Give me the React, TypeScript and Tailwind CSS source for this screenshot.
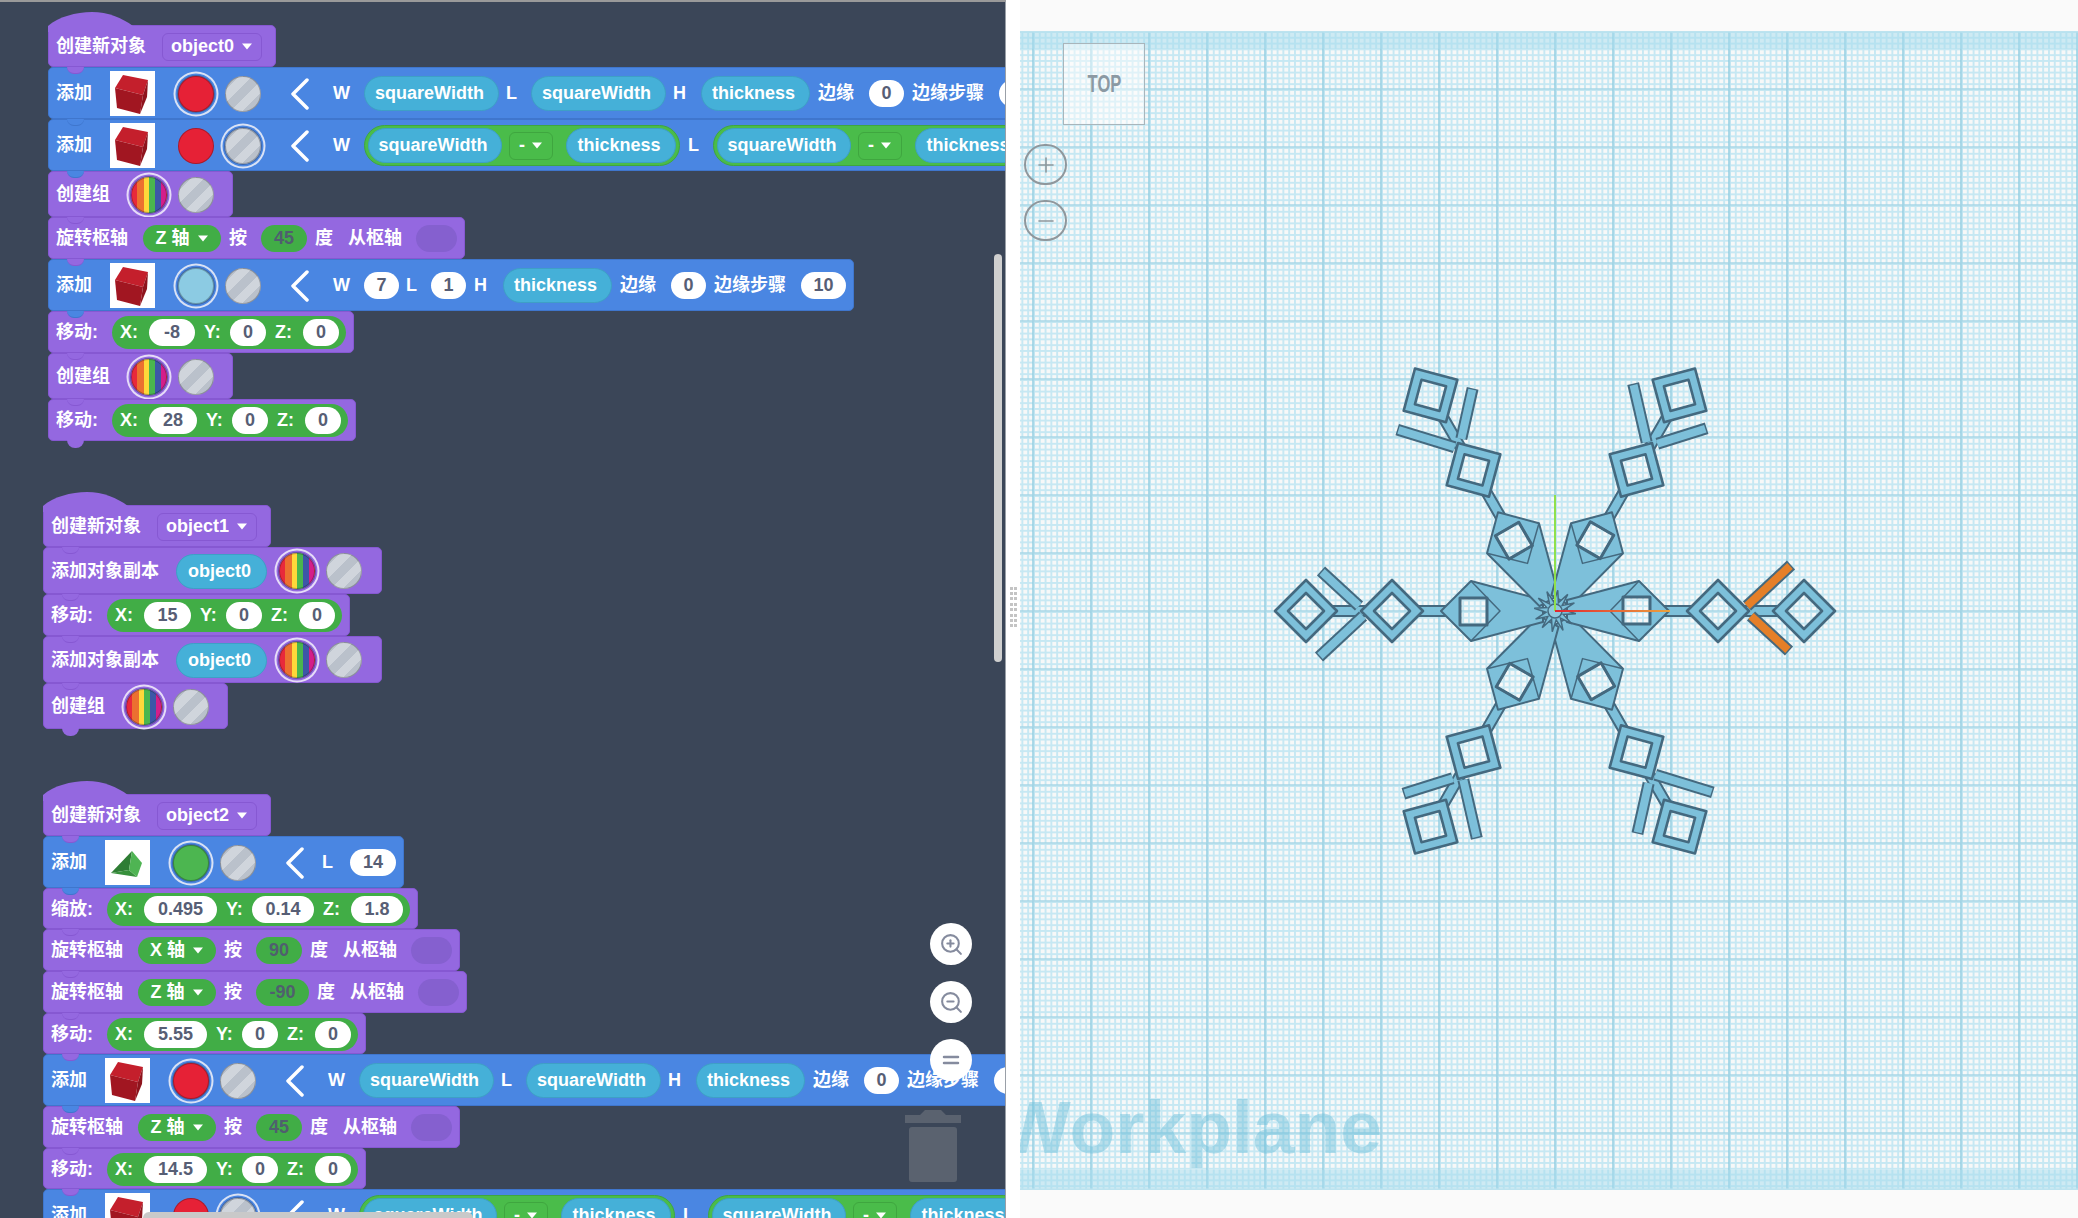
import type { ReactNode } from "react";
import { Equal, Minus, Plus, ZoomIn, ZoomOut } from "lucide-react";

const RED = "bg-[#e62136]";
const SKY = "bg-[#8ccbe3]";
const LIME = "bg-[#4cb650]";
const STRIPES =
  "bg-[repeating-linear-gradient(135deg,#bac1cb_0px,#bac1cb_9px,#d0d5dc_9px,#d0d5dc_18px)]";
const RAINBOW =
  "bg-[linear-gradient(90deg,#e8293b_0%,#e8293b_16%,#ec7030_16%,#ec7030_34%,#ffd83a_34%,#ffd83a_50%,#4ab64e_50%,#4ab64e_67%,#3d57a8_67%,#3d57a8_84%,#d41e8a_84%,#d41e8a_100%)]";
const RING_BLUE = "shadow-[0_0_0_1px_#3d66a8,0_0_0_2.5px_#4a86e2,0_0_0_4.5px_#d9e2f5]";
const RING_PURPLE = "shadow-[0_0_0_1px_#62509f,0_0_0_2.5px_#9468e0,0_0_0_4.5px_#e6dcf8]";

interface RowProps {
  color: "purple" | "blue";
  notch?: "purple" | "blue";
  tail?: boolean;
  className: string;
  children: ReactNode;
}

const Row = ({ color, notch, tail, className, children }: RowProps) => {
  const tone =
    color === "purple"
      ? "bg-[#9468e0] border-[#8658d2]"
      : "bg-[#4a86e2] border-[#3f76cd]";
  return (
    <div
      className={`relative flex w-max items-center rounded-[5px] border pl-[7px] pt-px ${tone} ${className}`}
    >
      {notch && (
        <span
          className={`absolute -top-px left-[18px] h-[7px] w-[17px] rounded-b-full border-b ${
            notch === "purple"
              ? "bg-[#9468e0] border-[#8658d2]"
              : "bg-[#4a86e2] border-[#3f76cd]"
          }`}
        />
      )}
      {tail && (
        <span className="absolute -bottom-[8px] left-[18px] h-[8px] w-[17px] rounded-b-full bg-[#9468e0]" />
      )}
      {children}
    </div>
  );
};

const Swatch = ({ fill, ring = "" }: { fill: string; ring?: string }) => (
  <span
    className={`block h-[36px] w-[36px] shrink-0 rounded-full border border-[#00000040] ${fill} ${ring}`}
  />
);

const Caret = () => (
  <svg width="12" height="7" viewBox="0 0 12 7" className="shrink-0">
    <polygon points="1,0.5 11,0.5 6,6.5" fill="white" />
  </svg>
);

const Field = ({ value, className }: { value: string; className: string }) => (
  <span
    className={`ml-[7px] flex h-[27px] shrink-0 items-center justify-center rounded-full bg-white text-[#575e75] ${className}`}
  >
    {value}
  </span>
);

const VarPill = ({ label, className }: { label: string; className: string }) => (
  <span
    className={`flex h-[35px] shrink-0 items-center justify-center rounded-full border border-[#3e9fc6] bg-[#45b0d8] pr-[4px] ${className}`}
  >
    {label}
  </span>
);

const Cube = () => (
  <svg viewBox="0 0 45 45" className="h-full w-full">
    <polygon points="5,17 13,4 38,9 33,24" fill="#c41f2c" />
    <polygon points="5,17 33,24 30,43 7,37" fill="#a11621" />
    <polygon points="33,24 38,9 37,26 30,43" fill="#8e141d" />
  </svg>
);

const Prism = () => (
  <svg viewBox="0 0 45 45" className="h-full w-full">
    <polygon points="27,11 6,33 24,30" fill="#2e7d34" />
    <polygon points="6,33 32,37 24,30" fill="#37903c" />
    <polygon points="27,11 37,23 32,37 24,30" fill="#4fb453" />
  </svg>
);

interface AddHeadProps {
  shape?: "cube" | "prism";
  fill: string;
  selected: 0 | 1;
}

// shape tile, the two colour swatches and the collapse arrow
const AddHead = ({ shape = "cube", fill, selected }: AddHeadProps) => (
  <>
    <span className="w-[36px]">添加</span>
    <span className="ml-[18px] block h-[45px] w-[45px] shrink-0 bg-white">
      {shape === "cube" ? <Cube /> : <Prism />}
    </span>
    <span className="ml-[23px]">
      <Swatch fill={fill} ring={selected === 0 ? RING_BLUE : ""} />
    </span>
    <span className="ml-[11px]">
      <Swatch fill={STRIPES} ring={selected === 1 ? RING_BLUE : ""} />
    </span>
    <svg width="20" height="32" viewBox="0 0 20 32" className="ml-[29px] shrink-0">
      <polyline
        points="17,2 3,16 17,30"
        fill="none"
        stroke="white"
        strokeWidth="3.5"
        strokeLinecap="round"
        strokeLinejoin="round"
      />
    </svg>
  </>
);

const Hat = ({ name }: { name: string }) => (
  <Row color="purple" className="h-[42px] pr-[13px]">
    <svg
      width="86"
      height="20"
      viewBox="0 0 86 20"
      className="absolute -left-px -top-[14px]"
    >
      <path d="M0 20 V14 C10 5 28 0 44 0 C60 0 74 6 85 14 L86 20 Z" fill="#9468e0" />
    </svg>
    <span className="w-[92px]">创建新对象</span>
    <span className="ml-[14px] flex h-[28px] w-[100px] items-center justify-center gap-[7px] rounded-[6px] border border-[#8658d2]">
      {name}
      <Caret />
    </span>
  </Row>
);

const Group = ({ notch, tail }: { notch: "purple" | "blue"; tail?: boolean }) => (
  <Row color="purple" notch={notch} tail={tail} className="h-[46px] pr-[18px]">
    <span className="w-[55px]">创建组</span>
    <span className="ml-[20px]">
      <Swatch fill={RAINBOW} ring={RING_PURPLE} />
    </span>
    <span className="ml-[11px]">
      <Swatch fill={STRIPES} />
    </span>
  </Row>
);

interface RotateProps {
  axis: string;
  degrees: string;
  wide?: boolean;
  notch: "purple" | "blue";
  className?: string;
}

const Rotate = ({ axis, degrees, wide, notch, className = "h-[42px]" }: RotateProps) => (
  <Row color="purple" notch={notch} className={`pr-[7px] ${className}`}>
    <span>旋转枢轴</span>
    <span className="ml-[15px] flex h-[27px] w-[78px] items-center justify-center gap-[7px] rounded-full bg-[#41ad46]">
      {axis} 轴
      <Caret />
    </span>
    <span className="ml-[8px]">按</span>
    <span
      className={`ml-[14px] flex h-[27px] items-center justify-center rounded-full bg-[#41ad46] text-[#4f5f6e] ${
        wide ? "w-[53px]" : "w-[46px]"
      }`}
    >
      {degrees}
    </span>
    <span className="ml-[8px]">度</span>
    <span className="ml-[15px]">从枢轴</span>
    <span className="ml-[14px] block h-[27px] w-[41px] rounded-full bg-[#8560cf]" />
  </Row>
);

interface XyzProps {
  label: string;
  x: string;
  y: string;
  z: string;
  xw: string;
  yw?: string;
  zw?: string;
  notch: "purple" | "blue";
  tail?: boolean;
  className?: string;
}

const Xyz = ({
  label,
  x,
  y,
  z,
  xw,
  yw = "w-[36px]",
  zw = "w-[36px]",
  notch,
  tail,
  className = "h-[41px]",
}: XyzProps) => (
  <Row color="purple" notch={notch} tail={tail} className={`pr-[7px] ${className}`}>
    <span className="w-[41px]">{label}</span>
    <span className="ml-[15px] flex h-[33px] items-center rounded-full bg-[#41ad46] pl-[8px] pr-[7px]">
      <span className="w-[22px]">X:</span>
      <Field value={x} className={xw} />
      <span className="ml-[9px] w-[19px]">Y:</span>
      <Field value={y} className={yw} />
      <span className="ml-[9px] w-[21px]">Z:</span>
      <Field value={z} className={zw} />
    </span>
  </Row>
);

const Copy = ({ notch }: { notch: "purple" | "blue" }) => (
  <Row color="purple" notch={notch} className="h-[47px] pr-[19px]">
    <span className="w-[110px]">添加对象副本</span>
    <VarPill label="object0" className="ml-[15px] w-[91px]" />
    <span className="ml-[12px]">
      <Swatch fill={RAINBOW} ring={RING_PURPLE} />
    </span>
    <span className="ml-[11px]">
      <Swatch fill={STRIPES} />
    </span>
  </Row>
);

const Minus2 = ({ left }: { left: string }) => (
  <span className="flex h-[41px] shrink-0 items-center rounded-full border border-[#3fa63f] bg-[#4abc4a] pl-[3px] pr-[3px]">
    <VarPill label={left} className="w-[134px]" />
    <span className="ml-[7px] flex h-[28px] w-[44px] items-center justify-center gap-[6px] rounded-[6px] border border-[#3fa63f]">
      -
      <Caret />
    </span>
    <VarPill label="thickness" className="ml-[13px] w-[110px]" />
  </span>
);

const SquareRowTail = () => (
  <>
    <span className="ml-[23px]">W</span>
    <VarPill label="squareWidth" className="ml-[14px] w-[135px]" />
    <span className="ml-[7px]">L</span>
    <VarPill label="squareWidth" className="ml-[14px] w-[135px]" />
    <span className="ml-[7px]">H</span>
    <VarPill label="thickness" className="ml-[15px] w-[109px]" />
    <span className="ml-[8px]">边缘</span>
    <Field value="0" className="ml-[15px] w-[35px]" />
    <span className="ml-[8px]">边缘步骤</span>
    <Field value="10" className="ml-[15px] w-[45px]" />
  </>
);

const MinusRowTail = () => (
  <>
    <span className="ml-[23px]">W</span>
    <span className="ml-[14px]">
      <Minus2 left="squareWidth" />
    </span>
    <span className="ml-[8px]">L</span>
    <span className="ml-[14px]">
      <Minus2 left="squareWidth" />
    </span>
  </>
);

const Arm = ({ angle, prong }: { angle: number; prong: string }) => (
  <g transform={`translate(1555 611) rotate(${angle})`} stroke="#44697f" strokeWidth="2" strokeLinejoin="round">
    <rect x="95" y="-5" width="44" height="10" fill="#7dc0da" />
    <path
      d="M12 -11 L84 -30 L114 0 L84 30 L12 11 Z M68 -14 L68 13 L95 13 L95 -14 Z"
      fill="#7dc0da"
      fillRule="evenodd"
    />
    <path d="M84 -30 L55 0 L84 30" fill="none" strokeWidth="1.5" />
    <rect x="68" y="-14" width="27" height="27" fill="none" strokeWidth="3" />
    <rect x="188" y="-5" width="36" height="10" fill="#7dc0da" />
    <path
      d="M132 0 L163 -31 L194 0 L163 31 Z M145 0 L163 18 L181 0 L163 -18 Z"
      fill="#7dc0da"
      fillRule="evenodd"
      strokeWidth="2.6"
    />
    <path
      d="M218 0 L249 -31 L280 0 L249 31 Z M231 0 L249 18 L267 0 L249 -18 Z"
      fill="#7dc0da"
      fillRule="evenodd"
      strokeWidth="2.6"
    />
    <line x1="192" y1="-5" x2="236" y2="-46" stroke="#44697f" strokeWidth="12" />
    <line x1="196" y1="5" x2="234" y2="40" stroke="#44697f" strokeWidth="12" />
    <line x1="192" y1="-5" x2="235" y2="-45" stroke={prong} strokeWidth="8" />
    <line x1="196" y1="5" x2="233" y2="39" stroke={prong} strokeWidth="8" />
  </g>
);

const STAR = Array.from({ length: 24 }, (_, i) => {
  const r = i % 2 === 0 ? 21 : 9;
  const a = (i * Math.PI) / 12 + Math.PI / 24;
  return `${1555 + r * Math.cos(a)},${611 + r * Math.sin(a)}`;
}).join(" ");

const Workplane = () => (
  <svg viewBox="1020 31 1058 1159" className="absolute inset-0 h-full w-full">
    <defs>
      <pattern id="minor" x="1555" y="611" width="5.8" height="5.8" patternUnits="userSpaceOnUse">
        <rect width="5.8" height="5.8" fill="#f7f8f8" />
        <rect x="0" width="1.9" height="5.8" fill="#c6e8f3" />
        <rect y="0" width="5.8" height="1.9" fill="#c6e8f3" />
      </pattern>
      <pattern id="major" x="1554.3" y="610.3" width="58" height="58" patternUnits="userSpaceOnUse">
        <rect width="1.4" height="58" fill="#8fcbdf" />
        <rect width="58" height="1.4" fill="#a4d5e5" />
      </pattern>
      <linearGradient id="xaxis" gradientUnits="userSpaceOnUse" x1="1555" y1="0" x2="1670" y2="0">
        <stop offset="0" stopColor="#e2252f" />
        <stop offset="1" stopColor="#eba23e" />
      </linearGradient>
    </defs>
    <rect x="1020" y="31" width="1058" height="1159" fill="url(#minor)" />
    <rect x="1020" y="31" width="1058" height="1159" fill="url(#major)" />
    <rect x="1020" y="31" width="1058" height="18" fill="#a6dced" opacity="0.5" />
    <rect x="1020" y="1170" width="1058" height="20" fill="#a6dced" opacity="0.5" />
    <rect x="1020" y="31" width="1058" height="1.5" fill="#bde3ef" />
    <rect x="1020" y="1188.5" width="1058" height="1.5" fill="#bde3ef" />
    {[60, 120, 180, 240, 300, 0].map((angle) => (
      <Arm key={angle} angle={angle} prong={angle === 0 ? "#e57f28" : "#7dc0da"} />
    ))}
    <polygon points={STAR} fill="#7dc0da" stroke="#44697f" strokeWidth="1.5" />
    <circle cx="1555" cy="611" r="7" fill="#8fc8de" stroke="#44697f" strokeWidth="1.5" />
    <line x1="1555" y1="495" x2="1555" y2="611" stroke="#8fe04c" strokeWidth="2" />
    <line x1="1555" y1="611" x2="1670" y2="611" stroke="url(#xaxis)" strokeWidth="2" />
  </svg>
);

export default function App() {
  return (
    <div className="flex h-screen w-screen overflow-hidden bg-white text-[18px] font-bold text-white [font-family:'Liberation_Sans','Noto_Sans_CJK_SC',sans-serif]">
      <div className="relative h-full w-[1006px] shrink-0 overflow-hidden border-r border-r-[#9aa0a8] border-t-2 border-t-[#9a9a9a] bg-[#3b4658] pt-[23px] whitespace-nowrap">
        <div className="ml-[48px] flex flex-col items-start">
          <Hat name="object0" />
          <Row color="blue" notch="purple" className="h-[52px]">
            <AddHead fill={RED} selected={0} />
            <SquareRowTail />
          </Row>
          <Row color="blue" notch="blue" className="h-[52px]">
            <AddHead fill={RED} selected={1} />
            <MinusRowTail />
          </Row>
          <Group notch="blue" />
          <Rotate axis="Z" degrees="45" notch="purple" />
          <Row color="blue" notch="purple" className="h-[52px] pr-[7px]">
            <AddHead fill={SKY} selected={0} />
            <span className="ml-[23px]">W</span>
            <Field value="7" className="ml-[14px] w-[35px]" />
            <span className="ml-[7px]">L</span>
            <Field value="1" className="ml-[14px] w-[35px]" />
            <span className="ml-[8px]">H</span>
            <VarPill label="thickness" className="ml-[16px] w-[109px]" />
            <span className="ml-[8px]">边缘</span>
            <Field value="0" className="ml-[15px] w-[35px]" />
            <span className="ml-[8px]">边缘步骤</span>
            <Field value="10" className="ml-[15px] w-[45px]" />
          </Row>
          <Xyz label="移动:" x="-8" y="0" z="0" xw="w-[46px]" notch="blue" className="h-[42px]" />
          <Group notch="purple" />
          <Xyz label="移动:" x="28" y="0" z="0" xw="w-[48px]" notch="purple" tail className="h-[42px]" />
        </div>

        <div className="ml-[43px] mt-[64px] flex flex-col items-start">
          <Hat name="object1" />
          <Copy notch="purple" />
          <Xyz label="移动:" x="15" y="0" z="0" xw="w-[47px]" notch="purple" className="h-[42px]" />
          <Copy notch="purple" />
          <Group notch="purple" tail />
        </div>

        <div className="ml-[43px] mt-[65px] flex flex-col items-start">
          <Hat name="object2" />
          <Row color="blue" notch="purple" className="h-[52px] pr-[7px]">
            <AddHead shape="prism" fill={LIME} selected={0} />
            <span className="ml-[17px]">L</span>
            <Field value="14" className="ml-[17px] w-[46px]" />
          </Row>
          <Xyz
            label="缩放:"
            x="0.495"
            y="0.14"
            z="1.8"
            xw="w-[73px]"
            yw="w-[62px]"
            zw="w-[52px]"
            notch="blue"
          />
          <Rotate axis="X" degrees="90" notch="purple" />
          <Rotate axis="Z" degrees="-90" wide notch="purple" />
          <Xyz label="移动:" x="5.55" y="0" z="0" xw="w-[63px]" notch="purple" />
          <Row color="blue" notch="purple" className="h-[52px]">
            <AddHead fill={RED} selected={0} />
            <SquareRowTail />
          </Row>
          <Rotate axis="Z" degrees="45" notch="blue" />
          <Xyz label="移动:" x="14.5" y="0" z="0" xw="w-[63px]" notch="purple" />
          <Row color="blue" notch="purple" className="h-[52px]">
            <AddHead fill={RED} selected={1} />
            <MinusRowTail />
          </Row>
        </div>

        {/* workspace controls, over the blocks */}
        <div className="absolute left-[930px] top-[921px] flex flex-col gap-[16px]">
          <button className="flex h-[42px] w-[42px] items-center justify-center rounded-full bg-white text-[#858b9e]">
            <ZoomIn size={25} strokeWidth={2} />
          </button>
          <button className="flex h-[42px] w-[42px] items-center justify-center rounded-full bg-white text-[#858b9e]">
            <ZoomOut size={25} strokeWidth={2} />
          </button>
          <button className="flex h-[42px] w-[42px] items-center justify-center rounded-full bg-white text-[#858b9e]">
            <Equal size={24} strokeWidth={2.5} />
          </button>
        </div>
        <svg width="58" height="74" viewBox="0 0 58 74" className="absolute left-[904px] top-[1106px]">
          <path d="M21 2 H37 L42 7 H57 V15 H1 V7 H16 Z" fill="#5a626f" />
          <rect x="5" y="19" width="48" height="55" rx="3" fill="#5a626f" />
        </svg>
        <span className="absolute right-[3px] top-[252px] h-[408px] w-[8px] rounded-full bg-[#cfcfcf]" />
        <span className="absolute bottom-0 left-[143px] h-[6px] w-[330px] rounded-t-full bg-[#c9c9c9]" />
      </div>

      <div className="flex w-[14px] shrink-0 flex-col items-center justify-center bg-white">
        <div className="mb-[4px] grid grid-cols-2 gap-x-[1px] gap-y-[2.4px]">
          {Array.from({ length: 16 }, (_, i) => (
            <span key={i} className="block h-[3px] w-[3px] bg-[#c4c4c4]" />
          ))}
        </div>
      </div>

      <div className="flex min-w-0 flex-1 flex-col bg-[#fafafa]">
        <div className="h-[31px] shrink-0" />
        <div className="relative min-h-0 flex-1 overflow-hidden">
          <Workplane />
          <span className="absolute left-[-20px] top-[1059px] text-[75px] leading-none text-[#6cbfda] opacity-45">
            Workplane
          </span>
          <div className="absolute left-[43px] top-[12px] flex h-[82px] w-[82px] items-center justify-center border border-[#a9b5bb] bg-white/45">
            <span className="scale-x-[0.72] text-[23px] text-[#8b99a3]">TOP</span>
          </div>
          <span className="absolute left-[4px] top-[113px] flex h-[41px] w-[43px] items-center justify-center rounded-full border-2 border-[#8f979c] text-[#8f979c]">
            <Plus size={24} strokeWidth={1.6} />
          </span>
          <span className="absolute left-[4px] top-[169px] flex h-[41px] w-[43px] items-center justify-center rounded-full border-2 border-[#8f979c] text-[#8f979c]">
            <Minus size={24} strokeWidth={1.6} />
          </span>
        </div>
        <div className="h-[28px] shrink-0" />
      </div>
    </div>
  );
}
